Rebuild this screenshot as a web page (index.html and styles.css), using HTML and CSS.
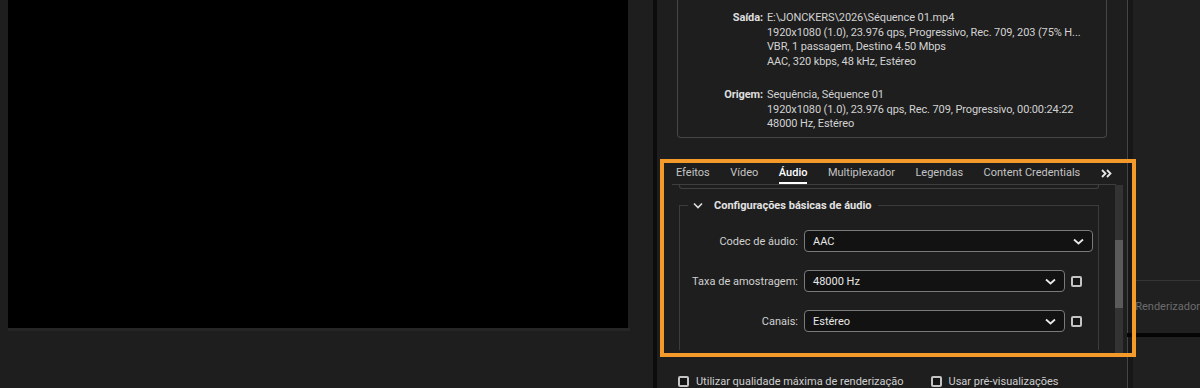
FILE: index.html
```html
<!DOCTYPE html>
<html lang="pt">
<head>
    <meta charset="UTF-8">
    <title>Exportar</title>
    <link rel="stylesheet" href="styles.css">
</head>
<body>
<div class="viewer">
    <div class="preview"></div>
    <div class="preview-edge"></div>
</div>
<div class="splitter"></div>

<div class="export-panel">
    <!-- Summary -->
    <div class="summary">
        <div class="summary-group">
            <div class="summary-label">Saída:</div>
            <div class="summary-value">
                <div>E:\JONCKERS\2026\Séquence 01.mp4</div>
                <div>1920x1080 (1.0), 23.976 qps, Progressivo, Rec. 709, 203 (75% H...</div>
                <div>VBR, 1 passagem, Destino 4.50 Mbps</div>
                <div>AAC, 320 kbps, 48 kHz, Estéreo</div>
            </div>
        </div>
        <div class="summary-group">
            <div class="summary-label">Origem:</div>
            <div class="summary-value">
                <div>Sequência, Séquence 01</div>
                <div>1920x1080 (1.0), 23.976 qps, Rec. 709, Progressivo, 00:00:24:22</div>
                <div>48000 Hz, Estéreo</div>
            </div>
        </div>
    </div>

    <!-- Settings tabs -->
    <div class="settings">
        <div class="tabs">
            <span class="tab">Efeitos</span>
            <span class="tab">Vídeo</span>
            <span class="tab active">Áudio</span>
            <span class="tab">Multiplexador</span>
            <span class="tab">Legendas</span>
            <span class="tab">Content Credentials</span>
            <span class="tab more">
                <svg width="11" height="9" viewBox="0 0 11 9"><path d="M1 1l3.5 3.5L1 8M6 1l3.5 3.5L6 8" fill="none" stroke="#e8e8e8" stroke-width="1.8"/></svg>
            </span>
        </div>
        <div class="settings-body">
            <div class="scroll-content">
                <div class="prev-box"></div>
                <fieldset class="group">
                    <legend>
                        <svg width="10" height="7" viewBox="0 0 10 7"><path d="M1 1.5l4 4 4-4" fill="none" stroke="#e0e0e0" stroke-width="1.6"/></svg>
                        Configurações básicas de áudio
                    </legend>
                    <div class="row">
                        <label>Codec de áudio:</label>
                        <div class="select wide">AAC
                            <svg width="11" height="7" viewBox="0 0 11 7"><path d="M1 1.5l4.5 4 4.5-4" fill="none" stroke="#e8e8e8" stroke-width="1.7"/></svg>
                        </div>
                    </div>
                    <div class="row">
                        <label>Taxa de amostragem:</label>
                        <div class="select">48000 Hz
                            <svg width="11" height="7" viewBox="0 0 11 7"><path d="M1 1.5l4.5 4 4.5-4" fill="none" stroke="#e8e8e8" stroke-width="1.7"/></svg>
                        </div>
                        <span class="check"></span>
                    </div>
                    <div class="row">
                        <label>Canais:</label>
                        <div class="select">Estéreo
                            <svg width="11" height="7" viewBox="0 0 11 7"><path d="M1 1.5l4.5 4 4.5-4" fill="none" stroke="#e8e8e8" stroke-width="1.7"/></svg>
                        </div>
                        <span class="check"></span>
                    </div>
                </fieldset>
            </div>
            <div class="scrollbar"><div class="thumb"></div></div>
        </div>
    </div>

    <div class="options">
        <span class="option"><span class="check"></span>Utilizar qualidade máxima de renderização</span>
        <span class="option"><span class="check"></span>Usar pré-visualizações</span>
    </div>
</div>

<div class="side">
    <div class="side-top"></div>
    <div class="side-label">Renderizador</div>
    <div class="side-bar"></div>
</div>

<!-- annotation box -->
<div class="highlight"></div>
</body>
</html>
```

FILE: styles.css
```css
body {
    margin: 0;
    width: 1200px;
    height: 388px;
    overflow: hidden;
    display: flex;
    background-color: #1e1e1e;
    font-family: Roboto, "Liberation Sans", sans-serif;
    font-size: 11px;
    color: #cfcfcf;
    position: relative;
}
.viewer {
    width: 654px;
    padding-left: 8px;
    box-sizing: border-box;
}
.preview {
    width: 620px;
    height: 328px;
    background: #000;
}
.preview-edge {
    width: 622px;
    height: 3px;
    background: #262626;
}
.splitter {
    width: 4px;
    background: #0c0c0c;
}

/* export panel */
.export-panel {
    width: 471px;
    display: flex;
    flex-direction: column;
    border-right: 1px solid #454545;
}
.summary {
    margin: 0 20px 0 20px;
    height: 138px;
    box-sizing: border-box;
    border: 1px solid #474747;
    border-top: none;
    border-radius: 0 0 4px 4px;
    padding-top: 11px;
    line-height: 14.5px;
    letter-spacing: -0.1px;
}
.summary-group {
    display: flex;
    gap: 4px;
    margin-bottom: 19px;
}
.summary-label {
    width: 85px;
    text-align: right;
    font-weight: bold;
    color: #dedede;
}
.summary-value {
    color: #d2d2d2;
}

.settings {
    margin: 25px 0 0 6px;
    height: 190px;
    display: flex;
    flex-direction: column;
    border-bottom: 4px solid #0b0b0b;
}
.tabs {
    display: flex;
    align-items: center;
    gap: 20.5px;
    height: 21px;
    margin: 0 11px 0 9px;
    padding-left: 4px;
    border-bottom: 1px solid #3e3e3e;
    white-space: nowrap;
}
.tab {
    color: #c4c4c4;
    height: 21px;
    line-height: 19px;
    box-sizing: border-box;
}
.tab.active {
    color: #fff;
    font-weight: 500;
    border-bottom: 2px solid #fff;
}
.tab.more {
    display: flex;
    align-items: center;
}
.settings-body {
    flex: 1;
    display: flex;
    overflow: hidden;
}
.scroll-content {
    flex: 1;
    padding-left: 16px;
    padding-right: 16px;
}
.prev-box {
    height: 3px;
    border: 1px solid #404040;
    border-top: none;
    border-radius: 0 0 3px 3px;
}
.scrollbar {
    width: 8px;
    background: #333;
    margin-right: 4px;
}
.thumb {
    margin-top: 55px;
    height: 68px;
    background: #5a5a5a;
}

fieldset.group {
    margin: 10px 0 0 0;
    padding: 18px 0 0 0;
    border: 1px solid #3c3c3c;
    border-bottom: none;
    min-width: 0;
}
fieldset.group legend {
    margin-left: 8px;
    padding: 0 6px 0 5px;
    font-weight: bold;
    color: #e2e2e2;
    display: flex;
    align-items: center;
    gap: 11px;
}
.row {
    display: flex;
    align-items: center;
    gap: 6px;
    height: 22px;
    margin-bottom: 18px;
}
.row label {
    width: 118px;
    text-align: right;
    color: #d0d0d0;
}
.select {
    width: 261px;
    height: 22px;
    box-sizing: border-box;
    background: #121212;
    border: 1px solid #7a7a7a;
    border-radius: 4px;
    padding: 0 8px;
    display: flex;
    align-items: center;
    justify-content: space-between;
    color: #e6e6e6;
}
.select.wide {
    width: 289px;
}
.check {
    width: 11px;
    height: 11px;
    box-sizing: border-box;
    border: 2px solid #c4c4c4;
    border-radius: 2px;
    background: #151515;
    display: inline-block;
}

.options {
    display: flex;
    gap: 27px;
    padding: 18px 0 0 21px;
}
.option {
    display: flex;
    align-items: center;
    gap: 7px;
    color: #cfcfcf;
}

/* right side panel */
.side {
    flex: 1;
    border-left: 5px solid #171717;
    background: #202020;
}
.side-top {
    height: 280px;
    border-bottom: 1px solid #353535;
}
.side-label {
    padding: 19px 0 0 2px;
    height: 52px;
    box-sizing: border-box;
    color: #6c6c6c;
    white-space: nowrap;
}
.side-bar {
    height: 4px;
    margin-left: -6px;
    background: #050505;
}

.highlight {
    position: absolute;
    left: 660px;
    top: 159px;
    width: 476px;
    height: 198px;
    box-sizing: border-box;
    border: 4px solid #f39a2b;
}
```
